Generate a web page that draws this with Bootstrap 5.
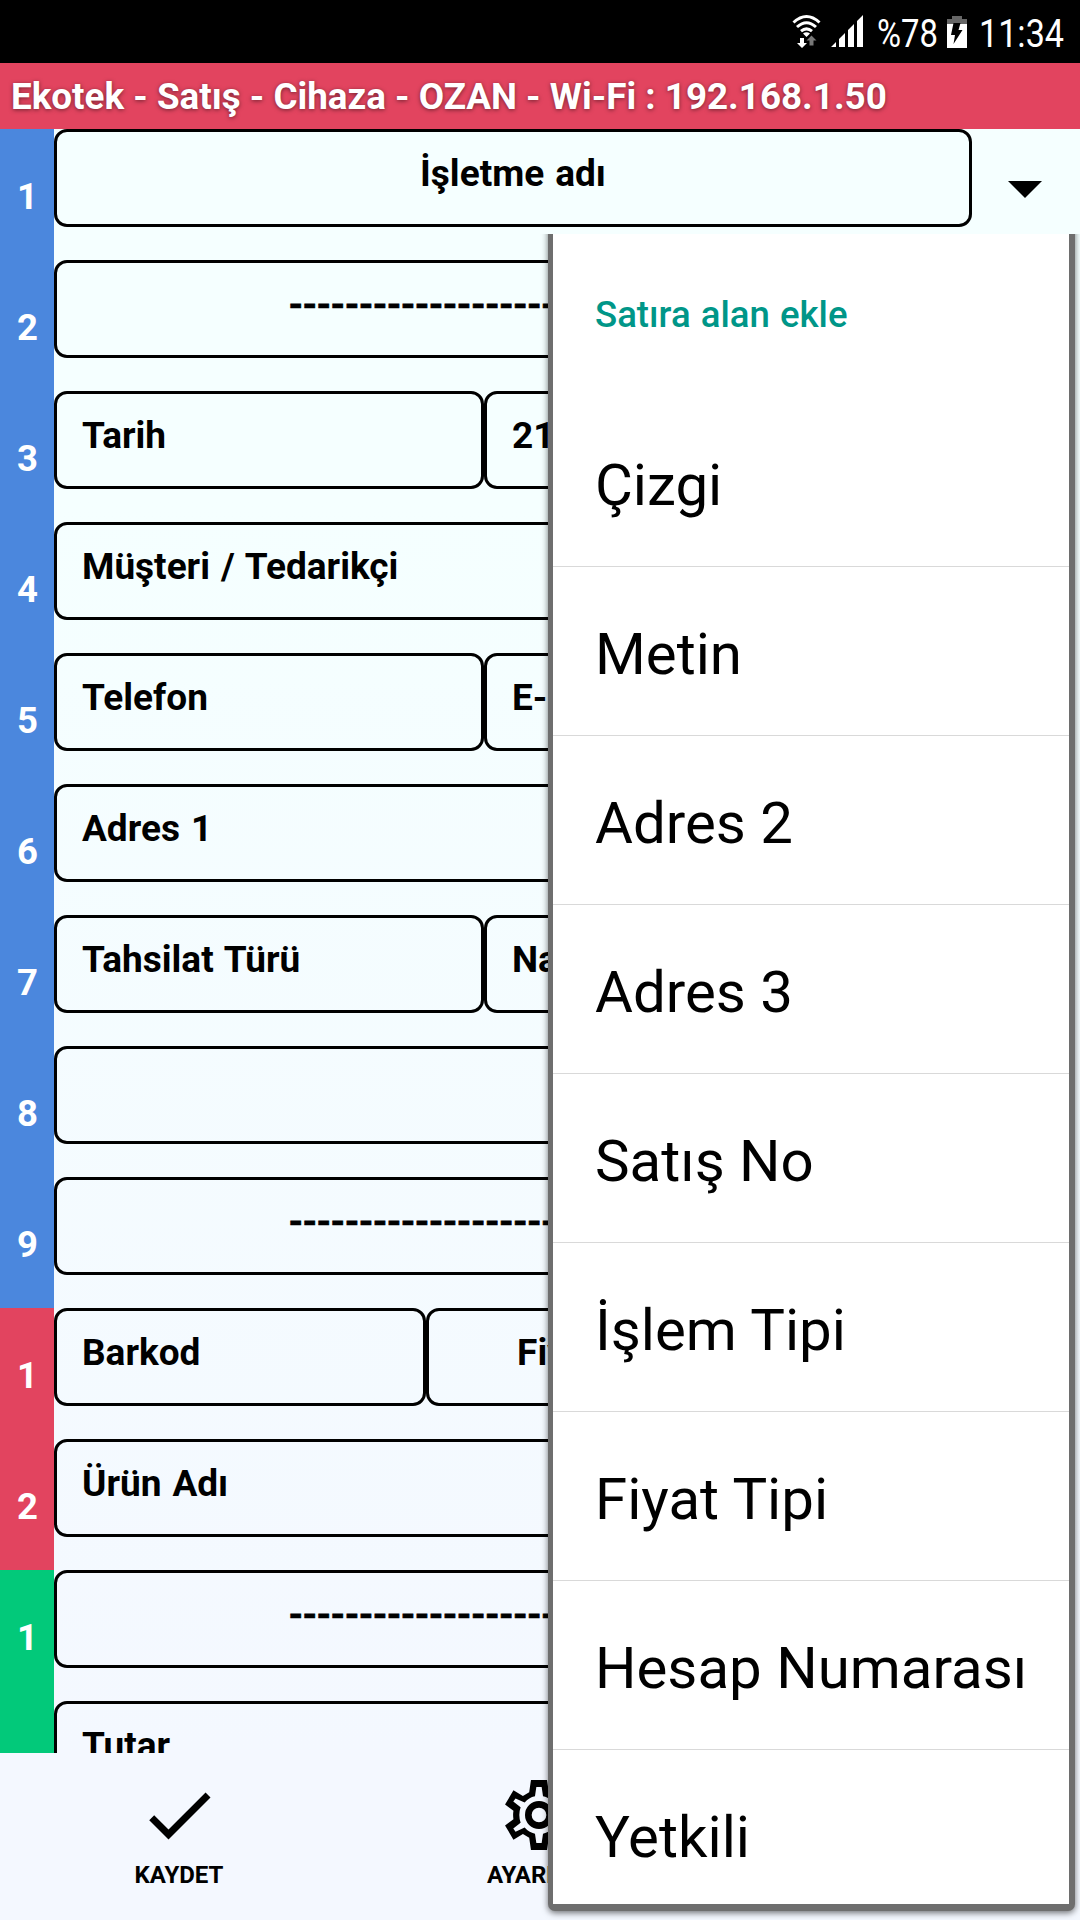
<!DOCTYPE html>
<html lang="tr">
<head>
<meta charset="utf-8">
<meta name="viewport" content="width=device-width, initial-scale=1">
<title>Ekotek</title>
<link href="https://cdn.jsdelivr.net/npm/bootstrap@5.3.0/dist/css/bootstrap.min.css" rel="stylesheet">
<style>
body{font-family:Roboto,"Noto Sans",sans-serif;color:#000;width:1080px;height:1920px;overflow:hidden;background:linear-gradient(#f5ffff 0,#f5ffff 500px,#f4f8ff 1753px,#f4f8ff)}
.status{height:63px;background:#000;flex:none}
.titlebar{height:66px;background:#e2445f;color:#fff;font-size:36.8px;font-weight:700;line-height:66px;padding:1px 0 0 11px;text-shadow:0 1px 4px rgba(0,0,0,.5);white-space:nowrap;flex:none}
.rows{height:1624px;overflow:hidden;flex:none}
.line{height:131px}
.num{width:54px;color:#fff;font-weight:700;font-size:36.5px;line-height:42px;padding:47px 0 0 1px;flex:none}
.g-blue{background:#4b87dd}.g-red{background:#e2445f}.g-green{background:#02c97a}
.fields{width:918px;height:98px;flex:none}
.field{border:3px solid #000;border-radius:13px;font-weight:700;font-size:37px;line-height:42px;word-spacing:1.8px;padding:21px 25px 0;white-space:nowrap;overflow:hidden}
.dashes{letter-spacing:-.55px;-webkit-text-stroke:.6px #000}
.w430{width:430px;flex:none}.w372{width:372px;flex:none}.w263{width:263px;flex:none}
.caret{width:34px;height:17px;margin:52px 0 0 36px}
.tab{flex:1;padding:20px 2px 0 0;font-size:24px;font-weight:700;line-height:28px}
.tab svg{width:84px;height:84px;display:block;margin-bottom:4px}
.popwrap{left:530px;top:234px;width:550px;height:1686px;overflow:hidden}
.popup{margin-left:23px;width:516px;height:1670px;background:#fff;overflow:hidden}
.popshade{left:18px;top:-20px;width:527px;height:1697px;background:#6e6e6e;border-radius:7px;box-shadow:0 2px 6px rgba(0,0,0,.55)}
.pophead{height:164px;color:#009688;font-size:36.6px;font-weight:500;line-height:42px;word-spacing:1px;padding:60px 0 0 42px}
.popitem{height:169px;border-bottom:1px solid #d9d9d9;font-size:58.2px;line-height:68px;padding:53px 0 0 42px;white-space:nowrap}
</style>
</head>
<body>
<div class="d-flex flex-column h-100">
 <div class="status d-flex">
  <svg width="1080" height="63" viewBox="0 0 1080 63">
   <g fill="none" stroke="#fff" stroke-width="3">
    <path d="M793.500 22.500Q806.500 10.500 819.500 22.500M797 27Q806.500 18.500 816 27M801 31.200Q806.500 26.500 812 31.200"/></g>
   <path fill="#fff" d="M803 33.500Q806.500 31 810 33.500L806.500 37zM800 38h4v5h3l-5 5-5-5h3z"/>
   <path fill="#777" d="M809.500 45.500v-5h-3l5-5 5 5h-3v5z"/>
   <path fill="#fff" d="M831 47l5-5v5zM839 39l6-6v14h-6zM848 30l6-6v23h-6zM857 21l6-6v32h-6z"/>
   <path fill="#666" d="M947 19h5v-3h10v3h5v5h-20z"/><path fill="#fff" d="M947 24h20v24h-20z"/>
   <path d="M953.500 23h7l-2 7h4l-9 14 1.500-9h-4z"/>
   <text x="877" y="47" fill="#fff" font-size="38" textLength="61" lengthAdjust="spacingAndGlyphs">%78</text>
   <text x="979" y="47" fill="#fff" font-size="38" textLength="85" lengthAdjust="spacingAndGlyphs">11:34</text>
  </svg>
 </div>
 <div class="titlebar">Ekotek - Satış - Cihaza - OZAN - Wi-Fi : 192.168.1.50</div>
 <div class="rows">
  <div class="line d-flex"><div class="num g-blue text-center">1</div><div class="fields d-flex"><div class="field flex-fill text-center">İşletme adı</div></div><svg class="caret" viewBox="0 0 34 17"><path d="M0 0h34L17 17z"/></svg></div>
  <div class="line d-flex"><div class="num g-blue text-center">2</div><div class="fields d-flex"><div class="field dashes flex-fill text-center">--------------------------------</div></div></div>
  <div class="line d-flex"><div class="num g-blue text-center">3</div><div class="fields d-flex"><div class="field w430">Tarih</div><div class="field flex-fill">21</div></div></div>
  <div class="line d-flex"><div class="num g-blue text-center">4</div><div class="fields d-flex"><div class="field flex-fill">Müşteri / Tedarikçi</div></div></div>
  <div class="line d-flex"><div class="num g-blue text-center">5</div><div class="fields d-flex"><div class="field w430">Telefon</div><div class="field flex-fill">E-</div></div></div>
  <div class="line d-flex"><div class="num g-blue text-center">6</div><div class="fields d-flex"><div class="field flex-fill">Adres 1</div></div></div>
  <div class="line d-flex"><div class="num g-blue text-center">7</div><div class="fields d-flex"><div class="field w430">Tahsilat Türü</div><div class="field flex-fill">Na</div></div></div>
  <div class="line d-flex"><div class="num g-blue text-center">8</div><div class="fields d-flex"><div class="field flex-fill"></div></div></div>
  <div class="line d-flex"><div class="num g-blue text-center">9</div><div class="fields d-flex"><div class="field dashes flex-fill text-center">--------------------------------</div></div></div>
  <div class="line d-flex"><div class="num g-red text-center">1</div><div class="fields d-flex"><div class="field w372">Barkod</div><div class="field w263 text-center">Fiyat</div><div class="field flex-fill"></div></div></div>
  <div class="line d-flex"><div class="num g-red text-center">2</div><div class="fields d-flex"><div class="field flex-fill">Ürün Adı</div></div></div>
  <div class="line d-flex"><div class="num g-green text-center">1</div><div class="fields d-flex"><div class="field dashes flex-fill text-center">--------------------------------</div></div></div>
  <div class="line d-flex"><div class="num g-green"></div><div class="fields d-flex"><div class="field flex-fill">Tutar</div></div></div>
 </div>
 <div class="d-flex flex-fill">
  <div class="tab d-flex flex-column align-items-center"><svg viewBox="0 0 24 24"><path d="M21 7L9 19l-5.500-5.500 1.410-1.410L9 16.170 19.590 5.590z"/></svg><span>KAYDET</span></div>
  <div class="tab d-flex flex-column align-items-center">
   <svg viewBox="-12 -12 24 24" fill-rule="evenodd">
    <path id="cog" d="M.1-10H-2.300L-2.800-6.500-4.600-5.450-7.300-7.050-9.700-3-7.300-1.200Q-7.500 0-7.300 1.200L-9.700 3-7.300 7.050-4.600 5.450-2.800 6.500-2.300 10H.1V8H-.76L-1.150 5.350Q-2.900 5-4.100 3.600L-6.700 4.750-7.350 3.850-5.250 2.200Q-6 0-5.250-2.200L-7.350-3.850-6.700-4.750-4.100-3.600Q-2.900-5-1.150-5.350L-.76-8H.1z"/>
    <use href="#cog" transform="scale(-1 1)"/>
    <circle r="3.050" fill="none" stroke="#000" stroke-width="1.900"/>
   </svg><span>AYARLAR</span></div>
  <div class="tab"></div>
 </div>
</div>
<div class="popwrap position-absolute">
 <div class="popshade position-absolute"></div>
 <div class="popup position-relative">
  <div class="pophead">Satıra alan ekle</div>
  <div class="popitem">Çizgi</div>
  <div class="popitem">Metin</div>
  <div class="popitem">Adres 2</div>
  <div class="popitem">Adres 3</div>
  <div class="popitem">Satış No</div>
  <div class="popitem">İşlem Tipi</div>
  <div class="popitem">Fiyat Tipi</div>
  <div class="popitem">Hesap Numarası</div>
  <div class="popitem">Yetkili</div>
 </div>
</div>
<script src="https://cdn.jsdelivr.net/npm/bootstrap@5.3.0/dist/js/bootstrap.bundle.min.js"></script>
</body>
</html>
